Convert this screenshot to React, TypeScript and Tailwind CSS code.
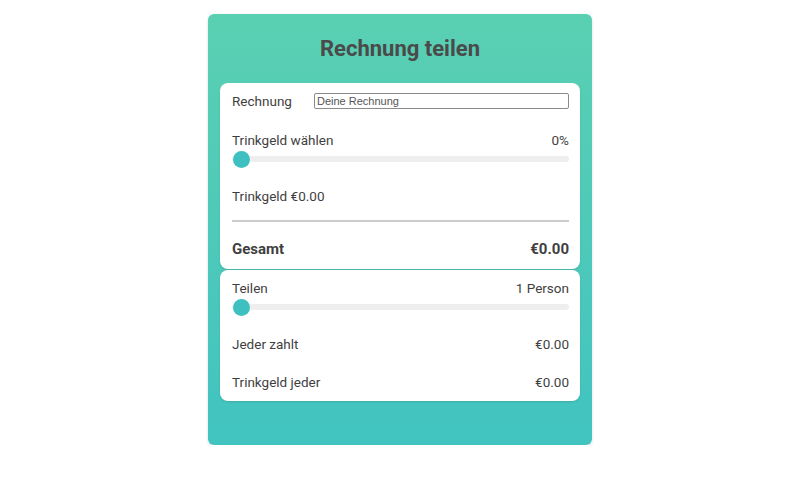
const font = { fontFamily: "Roboto, 'Noto Sans', sans-serif" };

function Slider() {
  return (
    <div className="relative flex h-[18px] items-center">
      <div className="h-[6px] w-full rounded-full bg-[#eeeeee]" />
      <div className="absolute left-[1px] top-[1px] h-[17px] w-[17px] rounded-full bg-[#3ec0c0]" />
    </div>
  );
}

function Row({ label, value }: { label: string; value?: string }) {
  return (
    <div className="flex h-[20px] items-center justify-between">
      <span>{label}</span>
      {value && <span>{value}</span>}
    </div>
  );
}

export default function App() {
  return (
    <div className="flex justify-center bg-white pt-[14px]" style={font}>
      <div className="w-[384px] rounded-[6px] bg-linear-to-b from-[#5ad0b2] to-[#41c3c0] px-[12px] pb-[44px] shadow-[0_1px_3px_rgba(0,0,0,0.15)]">
        <div className="flex h-[69px] items-center justify-center text-[22px] font-bold text-[#4a4a4a]">
          Rechnung teilen
        </div>

        <div className="rounded-[8px] bg-white pl-[12px] pr-[11px] pb-[10px] text-[13.5px] text-[#3f3f3f] shadow-[0_1px_2px_rgba(0,0,0,0.12)]">
          <div className="flex h-[36px] items-center">
            <span className="w-[82px]">Rechnung</span>
            <input
              className="h-[16px] flex-1 rounded-[2px] border border-[#8a8a8a] px-[2px] text-[11px] text-[#444] placeholder:text-[#555] outline-none"
              style={{ fontFamily: "'Liberation Sans', Arial, sans-serif" }}
              placeholder="Deine Rechnung"
            />
          </div>
          <div className="mt-[11px]">
            <Row label="Trinkgeld wählen" value="0%" />
          </div>
          <Slider />
          <div className="mt-[18px]">
            <Row label="Trinkgeld €0.00" />
          </div>
          <div className="mt-[14px] h-[2px] bg-[#cccccc]" />
          <div className="mt-[17px] flex h-[20px] items-center justify-between text-[15px] font-bold">
            <span>Gesamt</span>
            <span>€0.00</span>
          </div>
        </div>

        <div className="mt-[1px] rounded-[8px] bg-white pl-[12px] pr-[11px] pb-[9px] pt-[8px] text-[13.5px] text-[#3f3f3f] shadow-[0_1px_2px_rgba(0,0,0,0.12)]">
          <Row label="Teilen" value="1 Person" />
          <Slider />
          <div className="mt-[18px]">
            <Row label="Jeder zahlt" value="€0.00" />
          </div>
          <div className="mt-[18px]">
            <Row label="Trinkgeld jeder" value="€0.00" />
          </div>
        </div>
      </div>
    </div>
  );
}
